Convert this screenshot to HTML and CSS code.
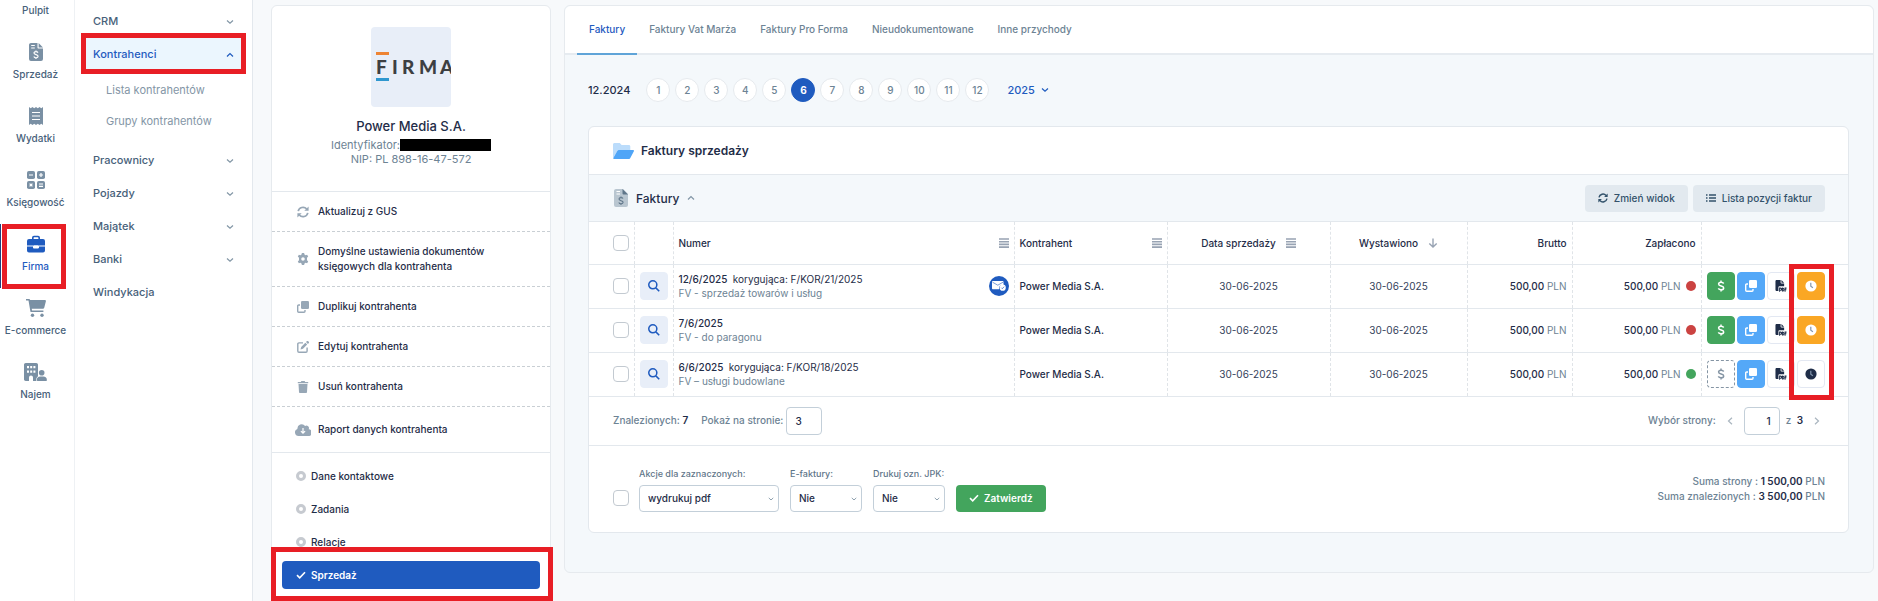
FILE: index.html
```html
<!DOCTYPE html>
<html lang="pl">
<head>
    <meta charset="UTF-8">
    <meta name="viewport" content="width=device-width, initial-scale=1.0">
    <title>Kontrahenci - Sprzedaż</title>
    <link rel="stylesheet" href="styles.css">
</head>
<body>
    <!-- Icon set -->
    <svg class="sprite" aria-hidden="true">
        <symbol id="i-invoice" viewBox="0 0 14 18">
            <path fill-rule="evenodd" d="M2 0h6.5v4.5c0 .6.4 1 1 1H14V16a2 2 0 0 1-2 2H2a2 2 0 0 1-2-2V2C0 .9.9 0 2 0zM2.2 2v1.1h3.6V2zM2.2 4.4v1.1h3.6V4.4z"/>
            <path d="M9.6 0 14 4.4H9.6z"/>
            <path d="M9 9.6C8.600 8.900 7.900 8.600 7 8.600c-1.200 0-2 .6-2 1.500 0 2.100 4.100 1.100 4.100 3.200 0 .9-.9 1.500-2.100 1.500-1 0-1.800-.4-2.200-1.200M7 7.400v1.200M7 14.800V16" fill="none" stroke="#fff" stroke-width="1.2"/>
        </symbol>
        <symbol id="i-receipt" viewBox="0 0 14 18">
            <path d="M0 0l1.700 1.200L3.500 0l1.700 1.200L7 0l1.800 1.200L10.500 0l1.800 1.200L14 0v18l-1.700-1.200L10.500 18l-1.700-1.200L7 18l-1.800-1.200L3.500 18l-1.800-1.200L0 18z"/>
            <path d="M3 5.500h8M3 9h8M3 12.500h8" stroke="#fff" stroke-width="1.100"/>
        </symbol>
        <symbol id="i-calc" viewBox="0 0 18 18">
            <rect width="8" height="8" rx="1.800"/><rect x="10" width="8" height="8" rx="1.800"/>
            <rect y="10" width="8" height="8" rx="1.800"/><rect x="10" y="10" width="8" height="8" rx="1.800"/>
            <path d="M2 4h4M12 4h4M14 2v4M2.600 12.600l2.800 2.800M5.400 12.600l-2.800 2.800M12 13h4M12 15.300h4" stroke="#fff" stroke-width="1.200"/>
        </symbol>
        <symbol id="i-briefcase" viewBox="0 0 18 17">
            <path d="M5.800 4V2.200c0-.7.5-1.200 1.200-1.200h4c.7 0 1.200.5 1.200 1.200V4" fill="none" stroke="currentColor" stroke-width="1.600"/>
            <path d="M2 3.500h14a2 2 0 0 1 2 2V10H0V5.500a2 2 0 0 1 2-2zM0 11h6v1c0 .5.4.9.900.9h4.200c.5 0 .9-.4.9-.9v-1h6v4a2 2 0 0 1-2 2H2a2 2 0 0 1-2-2z"/>
            <path d="M7 10h4v1.800H7z" fill="#fff"/>
        </symbol>
        <symbol id="i-cart" viewBox="0 0 20 18">
            <path d="M0 0h3.200c.4 0 .7.3.8.700L4.100 1H19c.7 0 1.100.6.9 1.200l-1.600 6.200c-.2.800-.9 1.300-1.700 1.300H5.700l.4 1.800h11.300v1.600H5.200c-.4 0-.7-.3-.8-.7L2.500 1.600H0z"/>
            <circle cx="6.500" cy="16.200" r="1.700"/><circle cx="16" cy="16.200" r="1.700"/>
        </symbol>
        <symbol id="i-building" viewBox="0 0 23 18">
            <path fill-rule="evenodd" d="M1.700 0h10.600c.9 0 1.700.8 1.700 1.700v11.600c-1 .8-1.700 2-1.700 3.300V18H9v-3.500a2 2 0 0 0-4 0V18H1.700C.8 18 0 17.200 0 16.300V1.700C0 .8.8 0 1.700 0zM3 3v2.200h2V3zm3.200 0v2.200h2V3zm3.200 0v2.200h2V3zM3 7.500v2.200h2V7.500zm3.200 0v2.200h2V7.500zm3.200 0v2.200h2V7.500z"/>
            <circle cx="17.700" cy="9.800" r="2.800"/>
            <path d="M16.500 13.600h2.700a3.700 3.700 0 0 1 3.700 3.700c0 .4-.3.700-.7.700h-8.700a.7.700 0 0 1-.7-.7 3.700 3.700 0 0 1 3.700-3.700z"/>
        </symbol>
        <symbol id="i-down" viewBox="0 0 8 8"><path d="M1 2.500 4 5.300 7 2.500" fill="none" stroke="currentColor" stroke-width="1.200"/></symbol>
        <symbol id="i-up" viewBox="0 0 8 8"><path d="M1 5.500 4 2.500 7 5.500" fill="none" stroke="currentColor" stroke-width="1.200"/></symbol>
        <symbol id="i-left" viewBox="0 0 8 8"><path d="M6 .8 2.500 4 6 7.200" fill="none" stroke="currentColor" stroke-width="1.200"/></symbol>
        <symbol id="i-right" viewBox="0 0 8 8"><path d="M2 .8 5.500 4 2 7.200" fill="none" stroke="currentColor" stroke-width="1.200"/></symbol>
        <symbol id="i-sync" viewBox="0 0 12 12">
            <path d="M1.200 5.200A4.900 4.900 0 0 1 9.700 3M10.800 6.800A4.900 4.900 0 0 1 2.300 9" fill="none" stroke="currentColor" stroke-width="1.700"/>
            <path d="M11.600.5v4.300H7.300zM.4 11.500V7.200h4.300z"/>
        </symbol>
        <symbol id="i-gear" viewBox="0 0 12 12">
            <path fill-rule="evenodd" d="M4.900 0h2.200l.4 1.600 1 .6 1.600-.5 1.100 1.900-1.200 1.200v2.400l1.200 1.200-1.100 1.900-1.600-.5-1 .6L7.100 12H4.900l-.4-1.600-1-.6-1.600.5L.8 8.400 2 7.200V4.800L.8 3.600l1.100-1.900 1.600.5 1-.6zM6 4.200a1.800 1.800 0 1 0 0 3.600 1.800 1.800 0 0 0 0-3.600z"/>
        </symbol>
        <symbol id="i-copy" viewBox="0 0 12 12">
            <rect x="4" width="8" height="8" rx="1.300"/>
            <path d="M3 4H1.700C1.100 4 .7 4.400.7 5v5.300c0 .6.4 1 1 1H7c.6 0 1-.4 1-1V9" fill="none" stroke="currentColor" stroke-width="1.400"/>
        </symbol>
        <symbol id="i-edit" viewBox="0 0 12 12">
            <path d="M6 1.900H2c-.7 0-1.200.5-1.200 1.200V10c0 .7.5 1.200 1.200 1.200h6.900c.7 0 1.200-.5 1.200-1.200V6.500" fill="none" stroke="currentColor" stroke-width="1.400"/>
            <path d="M8.300 1.700 10.200 3.600 6 7.800l-2.500.7L4.200 6zM9 1l.7-.7a1.100 1.100 0 0 1 1.600 0l.3.300a1.100 1.100 0 0 1 0 1.600l-.7.700z"/>
        </symbol>
        <symbol id="i-trash" viewBox="0 0 12 12">
            <path d="M.8.900h3L4.400 0h3.200l.6.900h3v1.400H.8zM1.500 3h9l-.5 7.900c0 .6-.5 1.100-1.100 1.100H3.100c-.6 0-1.100-.5-1.100-1.100z"/>
        </symbol>
        <symbol id="i-cloud" viewBox="0 0 16 12">
            <path d="M3.600 12A3.600 3.600 0 0 1 2.400 5 4.300 4.300 0 0 1 10.100 2a2.500 2.500 0 0 1 3.600 3.200A3.400 3.400 0 0 1 12.800 12z"/>
            <path d="M8 4v5M5.900 7.100 8 9.200l2.100-2.100" fill="none" stroke="#fff" stroke-width="1.200"/>
        </symbol>
        <symbol id="i-check" viewBox="0 0 10 8"><path d="M1 4.200 3.700 6.800 9 1.200" fill="none" stroke="currentColor" stroke-width="1.600"/></symbol>
        <symbol id="i-search" viewBox="0 0 11 11"><path d="M7.200 7.200 10.300 10.300M8.100 4.400a3.700 3.700 0 1 1-7.400 0 3.700 3.700 0 0 1 7.400 0z" fill="none" stroke="currentColor" stroke-width="1.400"/></symbol>
        <symbol id="i-bars" viewBox="0 0 10 10"><path d="M0 1h10M0 3.700h10M0 6.400h10M0 9.100h10" stroke="currentColor" stroke-width="1.600"/></symbol>
        <symbol id="i-arrow" viewBox="0 0 10 10"><path d="M5 .5v8.500M1.300 5.400 5 9l3.700-3.600" fill="none" stroke="currentColor" stroke-width="1.400"/></symbol>
        <symbol id="i-list" viewBox="0 0 10 8"><path d="M0 1h1.500M3 1h7M0 4h1.500M3 4h7M0 7h1.500M3 7h7" stroke="currentColor" stroke-width="1.300"/></symbol>
        <symbol id="i-dollar" viewBox="0 0 8 12"><path d="M6.700 3.500C6.200 2.700 5.300 2.300 4.100 2.300c-1.500 0-2.500.7-2.500 1.800C1.600 6.800 6.700 5.300 6.700 8c0 1.100-1 1.800-2.600 1.800-1.400 0-2.300-.5-2.800-1.400M4 .4v1.900M4 9.800v1.800" fill="none" stroke="currentColor" stroke-width="1.500"/></symbol>
        <symbol id="i-clock" viewBox="0 0 12 12">
            <circle cx="6" cy="6" r="5.600"/>
            <path class="hands" d="M5.800 2.700v3.500l2.100 1.500" fill="none" stroke-width="1.200"/>
        </symbol>
        <symbol id="i-pdf" viewBox="0 0 12 13">
            <path d="M1.400 0h4.200v3c0 .5.400.9.900.9h2.900v3H4.200c-.6 0-1 .4-1 1V12H1.400C.6 12 0 11.400 0 10.600V1.400C0 .6.600 0 1.400 0zM6.500.1l2.800 2.800H6.500z"/>
            <path d="M4.500 12.700V8.800h1c1.500 0 1.500 2.200 0 2.200h-1M7.500 12.200V8.800c2.200-.2 2.200 3.500 0 3.400M10.400 12.700V8.800H12M10.400 10.600h1.400" fill="none" stroke="currentColor" stroke-width="1.100"/>
        </symbol>
        <symbol id="i-folder" viewBox="0 0 21 16">
            <path d="M1.500 0h5.300l1.800 2h7.200c.9 0 1.500.6 1.500 1.500V7H5L0 15V1.500C0 .7.700 0 1.500 0z" fill="#bbdcfb"/>
            <path d="M5.700 7h14.500c.6 0 1 .6.700 1.200l-3.600 6.900c-.2.500-.7.900-1.300.9H.9c-.5 0-.8-.5-.6-1L4.400 7.800c.3-.5.800-.8 1.300-.8z" fill="#4fa5f7"/>
        </symbol>
        <symbol id="i-mail" viewBox="0 0 14 10">
            <path d="M1 0h9.500c.6 0 1 .4 1 1v3H9.800C8 4 7 5.300 7.200 8.300H1c-.6 0-1-.4-1-1V1c0-.6.400-1 1-1z"/>
            <path d="M.5 1.200 5.800 4.200 11 1.200" fill="none" stroke="#1f5bbf" stroke-width=".6"/>
            <circle cx="10.700" cy="6.700" r="3.100"/>
            <path d="M9.300 6.700l1 1 1.800-2" fill="none" stroke="#1f5bbf" stroke-width=".7"/>
        </symbol>
    </svg>

    <div class="layout">
        <nav class="rail">
            <a class="rail-item first" href="#">Pulpit</a>
            <a class="rail-item" href="#"><svg width="14" height="20"><use href="#i-invoice"/></svg>Sprzedaż</a>
            <a class="rail-item" href="#"><svg width="14" height="20"><use href="#i-receipt"/></svg>Wydatki</a>
            <a class="rail-item" href="#"><svg width="18" height="20"><use href="#i-calc"/></svg>Księgowość</a>
            <a class="rail-item active" href="#"><svg width="18" height="20"><use href="#i-briefcase"/></svg>Firma<span class="mark mark-rail"></span></a>
            <a class="rail-item" href="#"><svg width="20" height="20"><use href="#i-cart"/></svg>E-commerce</a>
            <a class="rail-item" href="#"><svg width="23" height="20"><use href="#i-building"/></svg>Najem</a>
        </nav>

        <nav class="menu">
            <a class="menu-item" href="#">CRM<svg class="chev"><use href="#i-down"/></svg></a>
            <a class="menu-item active" href="#">Kontrahenci<svg class="chev"><use href="#i-up"/></svg><span class="mark mark-menu"></span></a>
            <div class="submenu">
                <a href="#">Lista kontrahentów</a>
                <a href="#">Grupy kontrahentów</a>
            </div>
            <a class="menu-item" href="#">Pracownicy<svg class="chev"><use href="#i-down"/></svg></a>
            <a class="menu-item" href="#">Pojazdy<svg class="chev"><use href="#i-down"/></svg></a>
            <a class="menu-item" href="#">Majątek<svg class="chev"><use href="#i-down"/></svg></a>
            <a class="menu-item" href="#">Banki<svg class="chev"><use href="#i-down"/></svg></a>
            <a class="menu-item" href="#">Windykacja</a>
        </nav>

        <aside class="card profile">
            <div class="profile-head">
                <svg class="logo" viewBox="0 0 80 80">
                    <rect x="5" y="25" width="13" height="3" fill="#ee8434"/>
                    <text x="5 21 31 48 69" y="47">FIRMA</text>
                    <rect x="5" y="51" width="13" height="3" fill="#2f97cf"/>
                </svg>
                <h1>Power Media S.A.</h1>
                <div class="ident">Identyfikator:<span class="redacted"></span></div>
                <div class="nip">NIP: PL 898-16-47-572</div>
            </div>
            <div class="profile-actions">
                <a href="#"><svg><use href="#i-sync"/></svg>Aktualizuj z GUS</a>
                <a href="#"><svg><use href="#i-gear"/></svg>Domyślne ustawienia dokumentów księgowych dla kontrahenta</a>
                <a href="#"><svg><use href="#i-copy"/></svg>Duplikuj kontrahenta</a>
                <a href="#"><svg><use href="#i-edit"/></svg>Edytuj kontrahenta</a>
                <a href="#"><svg><use href="#i-trash"/></svg>Usuń kontrahenta</a>
                <a class="last" href="#"><svg><use href="#i-cloud"/></svg>Raport danych kontrahenta</a>
            </div>
            <div class="profile-tabs">
                <a href="#"><span class="ring"></span>Dane kontaktowe</a>
                <a href="#"><span class="ring"></span>Zadania</a>
                <a href="#"><span class="ring"></span>Relacje</a>
                <a class="active" href="#"><svg><use href="#i-check"/></svg>Sprzedaż<span class="mark mark-tab"></span></a>
            </div>
        </aside>

        <main class="card main">
            <nav class="tabs">
                <a class="active" href="#">Faktury</a>
                <a href="#">Faktury Vat Marża</a>
                <a href="#">Faktury Pro Forma</a>
                <a href="#">Nieudokumentowane</a>
                <a href="#">Inne przychody</a>
            </nav>
            <div class="content">
                <div class="months">
                    <a class="prev-month" href="#">12.2024</a>
                    <div class="month-list">
                        <button>1</button><button>2</button><button>3</button><button>4</button>
                        <button>5</button><button class="active">6</button><button>7</button><button>8</button>
                        <button>9</button><button>10</button><button>11</button><button>12</button>
                    </div>
                    <button class="year">2025<svg class="chev"><use href="#i-down"/></svg></button>
                </div>

                <section class="panel">
                    <div class="panel-title">
                        <svg width="21" height="16"><use href="#i-folder"/></svg>
                        <h2>Faktury sprzedaży</h2>
                    </div>
                    <div class="panel-bar">
                        <svg class="bar-icon" viewBox="0 0 14 18">
                            <path d="M2 0h7l5 5v11a2 2 0 0 1-2 2H2a2 2 0 0 1-2-2V2C0 .9.900 0 2 0z" fill="#b9c6d0"/>
                            <path d="M8.500 0 14 5.500H9.500a1 1 0 0 1-1-1z" fill="#5f7689"/>
                            <path d="M2.500 2.500h3.500M2.500 5h3.500" stroke="#fff"/>
                            <path d="M9 9.600C8.600 8.900 7.900 8.600 7 8.600c-1.200 0-2 .6-2 1.500 0 2.100 4.100 1.100 4.100 3.200 0 .9-.9 1.500-2.100 1.500-1 0-1.800-.4-2.200-1.200M7 7.400v1.200M7 14.800V16" fill="none" stroke="#5f7689" stroke-width="1.100"/>
                        </svg>
                        <h3>Faktury</h3>
                        <svg class="chev"><use href="#i-up"/></svg>
                        <div class="bar-buttons">
                            <button class="btn-light"><svg width="10" height="10"><use href="#i-sync"/></svg>Zmień widok</button>
                            <button class="btn-light"><svg width="10" height="8"><use href="#i-list"/></svg>Lista pozycji faktur</button>
                        </div>
                    </div>

                    <table class="invoices">
                        <colgroup>
                            <col class="c-check"><col class="c-view"><col><col class="c-client"><col class="c-sale">
                            <col class="c-issued"><col class="c-gross"><col class="c-paid"><col class="c-tools">
                        </colgroup>
                        <thead>
                            <tr>
                                <th class="check"><input type="checkbox" aria-label="Zaznacz wszystkie"></th>
                                <th></th>
                                <th><div class="cell">Numer<svg class="sort"><use href="#i-bars"/></svg></div></th>
                                <th><div class="cell">Kontrahent<svg class="sort"><use href="#i-bars"/></svg></div></th>
                                <th><div class="cell center">Data sprzedaży<svg class="sort"><use href="#i-bars"/></svg></div></th>
                                <th><div class="cell center">Wystawiono<svg class="sort"><use href="#i-arrow"/></svg></div></th>
                                <th class="num">Brutto</th>
                                <th class="num">Zapłacono</th>
                                <th></th>
                            </tr>
                        </thead>
                        <tbody>
                            <tr>
                                <td class="check"><input type="checkbox" aria-label="12/6/2025"></td>
                                <td><button class="tool view" aria-label="Podgląd"><svg><use href="#i-search"/></svg></button></td>
                                <td>
                                    <div class="cell">
                                        <div><b>12/6/2025</b>&nbsp; <span class="corr">korygująca: F/KOR/21/2025</span><small>FV - sprzedaż towarów i usług</small></div>
                                        <span class="mail"><svg><use href="#i-mail"/></svg></span>
                                    </div>
                                </td>
                                <td>Power Media S.A.</td>
                                <td class="date">30-06-2025</td>
                                <td class="date">30-06-2025</td>
                                <td class="num">500,00 <i>PLN</i></td>
                                <td class="num">500,00 <i>PLN</i><span class="dot red"></span></td>
                                <td>
                                    <div class="tools">
                                        <button class="tool green" aria-label="Zapłata"><svg><use href="#i-dollar"/></svg></button>
                                        <button class="tool blue" aria-label="Duplikuj"><svg><use href="#i-copy"/></svg></button>
                                        <button class="tool" aria-label="Pobierz"><svg><use href="#i-pdf"/></svg></button>
                                        <button class="tool orange" aria-label="Historia"><svg><use href="#i-clock"/></svg><span class="mark mark-tools"></span></button>
                                    </div>
                                </td>
                            </tr>
                            <tr>
                                <td class="check"><input type="checkbox" aria-label="7/6/2025"></td>
                                <td><button class="tool view" aria-label="Podgląd"><svg><use href="#i-search"/></svg></button></td>
                                <td><b>7/6/2025</b><small>FV - do paragonu</small></td>
                                <td>Power Media S.A.</td>
                                <td class="date">30-06-2025</td>
                                <td class="date">30-06-2025</td>
                                <td class="num">500,00 <i>PLN</i></td>
                                <td class="num">500,00 <i>PLN</i><span class="dot red"></span></td>
                                <td>
                                    <div class="tools">
                                        <button class="tool green" aria-label="Zapłata"><svg><use href="#i-dollar"/></svg></button>
                                        <button class="tool blue" aria-label="Duplikuj"><svg><use href="#i-copy"/></svg></button>
                                        <button class="tool" aria-label="Pobierz"><svg><use href="#i-pdf"/></svg></button>
                                        <button class="tool orange" aria-label="Historia"><svg><use href="#i-clock"/></svg></button>
                                    </div>
                                </td>
                            </tr>
                            <tr>
                                <td class="check"><input type="checkbox" aria-label="6/6/2025"></td>
                                <td><button class="tool view" aria-label="Podgląd"><svg><use href="#i-search"/></svg></button></td>
                                <td><b>6/6/2025</b>&nbsp; <span class="corr">korygująca: F/KOR/18/2025</span><small>FV – usługi budowlane</small></td>
                                <td>Power Media S.A.</td>
                                <td class="date">30-06-2025</td>
                                <td class="date">30-06-2025</td>
                                <td class="num">500,00 <i>PLN</i></td>
                                <td class="num">500,00 <i>PLN</i><span class="dot"></span></td>
                                <td>
                                    <div class="tools">
                                        <button class="tool dashed" aria-label="Zapłata"><svg><use href="#i-dollar"/></svg></button>
                                        <button class="tool blue" aria-label="Duplikuj"><svg><use href="#i-copy"/></svg></button>
                                        <button class="tool" aria-label="Pobierz"><svg><use href="#i-pdf"/></svg></button>
                                        <button class="tool" aria-label="Historia"><svg><use href="#i-clock"/></svg></button>
                                    </div>
                                </td>
                            </tr>
                        </tbody>
                    </table>

                    <div class="pager">
                        <span>Znalezionych: <b>7</b></span>
                        <label class="per-page" for="per-page">Pokaż na stronie:</label>
                        <input id="per-page" type="text" value="3">
                        <div class="pages">
                            <label for="page">Wybór strony:</label>
                            <svg class="arrow"><use href="#i-left"/></svg>
                            <input id="page" class="page-no" type="text" value="1">
                            <span>z &nbsp;<b>3</b></span>
                            <svg class="arrow"><use href="#i-right"/></svg>
                        </div>
                    </div>

                    <div class="bulk">
                        <input type="checkbox" aria-label="Zaznacz wszystkie">
                        <div class="field wide">
                            <label for="action">Akcje dla zaznaczonych:</label>
                            <div class="select"><select id="action"><option>wydrukuj pdf</option></select><svg><use href="#i-down"/></svg></div>
                        </div>
                        <div class="field">
                            <label for="einvoice">E-faktury:</label>
                            <div class="select"><select id="einvoice"><option>Nie</option></select><svg><use href="#i-down"/></svg></div>
                        </div>
                        <div class="field">
                            <label for="jpk">Drukuj ozn. JPK:</label>
                            <div class="select"><select id="jpk"><option>Nie</option></select><svg><use href="#i-down"/></svg></div>
                        </div>
                        <button class="btn-submit"><svg width="10" height="8"><use href="#i-check"/></svg>Zatwierdź</button>
                        <div class="sums">
                            <div>Suma strony : <b>1 500,00</b> PLN</div>
                            <div>Suma znalezionych : <b>3 500,00</b> PLN</div>
                        </div>
                    </div>
                </section>
            </div>
        </main>
    </div>
</body>
</html>
```

FILE: styles.css
```css
* {
    box-sizing: border-box;
}

body {
    margin: 0;
    background: #f7f9fb;
    color: #1f2d48;
    font-family: Inter, 'Liberation Sans', sans-serif;
    font-size: 11px;
    line-height: 15px;
}

a {
    color: inherit;
    text-decoration: none;
}

button, input, select {
    font: inherit;
    color: inherit;
    margin: 0;
}

button {
    cursor: pointer;
}

svg {
    fill: currentColor;
    flex: none;
}

h1, h2, h3 {
    margin: 0;
}

b {
    font-weight: 600;
}

.sprite {
    position: absolute;
    width: 0;
    height: 0;
}

.layout {
    display: flex;
    align-items: flex-start;
    height: 100vh;
    overflow: hidden;
}

.chev {
    width: 8px;
    height: 8px;
    color: #8296a6;
}

/* red highlight frames */
.mark {
    position: absolute;
    border: 5px solid #e81e25;
    pointer-events: none;
}

/* left icon rail */
.rail {
    flex: none;
    width: 75px;
    height: 100%;
    background: #fff;
    border-right: 1px solid #eef1f4;
}

.rail-item {
    position: relative;
    display: flex;
    flex-direction: column;
    align-items: center;
    gap: 4px;
    padding: 10px 3px 14px 0;
    font-size: 10px;
    line-height: 16px;
    font-weight: 500;
    color: #47617a;
}

.rail-item.first {
    padding-top: 2px;
}

.rail-item svg {
    color: #7a90a4;
}

.rail-item.active,
.rail-item.active svg {
    color: #1f5bbf;
}

.rail-item.active {
    box-shadow: inset 1px 0 #1f3f7f;
}

.mark-rail {
    inset: 0 8px -1px 2px;
}

/* menu */
.menu {
    flex: none;
    width: 178px;
    height: 100%;
    padding: 5px 6px 0 11px;
    background: #fff;
    border-right: 1px solid #e3e8ed;
}

.menu-item {
    position: relative;
    display: flex;
    align-items: center;
    justify-content: space-between;
    height: 33px;
    padding: 0 12px 0 7px;
    font-weight: 500;
    color: #47617a;
}

.menu-item.active {
    background: #ebf6fe;
    color: #1f5bbf;
}

.menu-item.active .chev {
    color: #1f5bbf;
}

.mark-menu {
    inset: -5px 0 -3px -5px;
}

.submenu {
    padding: 4px 0 7px 20px;
    line-height: 31px;
    color: #8496a6;
}

.submenu a {
    display: block;
}

/* cards */
.card {
    margin-top: 5px;
    border: 1px solid #e6eaee;
    border-radius: 6px;
    background: #fff;
}

.profile {
    flex: none;
    width: 280px;
    margin-left: 18px;
}

.profile-head {
    display: flex;
    flex-direction: column;
    align-items: center;
    height: 186px;
    padding-top: 21px;
    border-bottom: 1px solid #e3e8ed;
    color: #6d8394;
    line-height: 14px;
}

.logo {
    width: 80px;
    height: 80px;
    border-radius: 4px;
    background: #e8eef8;
}

.logo text {
    font-family: Lato, sans-serif;
    font-size: 19px;
    font-weight: 900;
    fill: #3d3f42;
}

.profile-head h1 {
    margin: 10px 0 3px;
    font-size: 13px;
    line-height: 18px;
    font-weight: 500;
    color: #1f2d48;
}

.ident {
    display: flex;
    align-items: center;
}

.redacted {
    width: 91px;
    height: 12px;
    background: #000;
}

.profile-actions {
    border-bottom: 1px solid #e3e8ed;
    font-size: 10px;
}

.profile-actions a {
    display: flex;
    align-items: center;
    gap: 7px;
    padding: 12px 40px 12px 23px;
    border-bottom: 1px dashed #c9cfd4;
    font-weight: 500;
}

.profile-actions a.last {
    padding-top: 15px;
    padding-bottom: 15px;
    border-bottom: 0;
}

.profile-actions svg {
    width: 16px;
    height: 12px;
    color: #97a7b6;
}

.profile-tabs {
    padding: 9px 10px;
    font-size: 10px;
    font-weight: 500;
}

.profile-tabs a {
    position: relative;
    display: flex;
    align-items: center;
    gap: 5px;
    height: 28px;
    margin-bottom: 5px;
    padding-left: 14px;
}

.profile-tabs .ring {
    width: 10px;
    height: 10px;
    border: 3px solid #c6cad0;
    border-radius: 50%;
}

.profile-tabs svg {
    width: 10px;
    height: 8px;
}

.profile-tabs a.active {
    border-radius: 4px;
    background: #1f5bbf;
    color: #fff;
    font-weight: 600;
}

.mark-tab {
    inset: -14px -13px -12px -11px;
}

/* main area */
.main {
    flex: 1;
    min-width: 0;
    margin-left: 13px;
    margin-right: 4px;
    background: #f4f8fb;
}

.tabs {
    display: flex;
    padding-left: 12px;
    background: #fff;
    border-bottom: 2px solid #e6ebf0;
    border-radius: 6px 6px 0 0;
    font-size: 10px;
    font-weight: 500;
    color: #6d8394;
}

.tabs a {
    margin-bottom: -2px;
    padding: 16px 12px;
    border-bottom: 2px solid transparent;
}

.tabs a.active {
    color: #1f5bbf;
    border-color: #5fa4d8;
}

.content {
    padding: 23px 24px 39px 23px;
}

.months {
    display: flex;
    align-items: center;
    margin-bottom: 24px;
    font-weight: 500;
}

.month-list {
    display: flex;
    gap: 5px;
    margin: 0 18px 0 16px;
}

.month-list button {
    width: 24px;
    height: 24px;
    padding: 0;
    border: 1px solid #e6eaee;
    border-radius: 50%;
    background: #fff;
    color: #6d8394;
    font-size: 10px;
}

.month-list .active {
    background: #1f5bbf;
    border-color: #1f5bbf;
    color: #fff;
    font-weight: 700;
}

.year {
    display: flex;
    align-items: center;
    gap: 6px;
    padding: 0;
    border: 0;
    background: none;
    color: #1f5bbf;
}

.year .chev {
    color: #1f5bbf;
}

/* invoices panel */
.panel {
    border: 1px solid #e3e8ed;
    border-radius: 6px;
    background: #fff;
}

.panel-title {
    display: flex;
    align-items: center;
    gap: 7px;
    height: 47px;
    padding: 0 24px;
}

.panel-title h2 {
    font-size: 12px;
    font-weight: 600;
}

.panel-bar {
    display: flex;
    align-items: center;
    gap: 8px;
    height: 48px;
    padding: 0 23px 0 25px;
    border: solid #e3e8ed;
    border-width: 1px 0;
    background: #f4f8fb;
}

.bar-icon {
    width: 14px;
    height: 18px;
}

.panel-bar h3 {
    font-size: 12px;
    font-weight: 500;
}

.bar-buttons {
    display: flex;
    gap: 5px;
    margin-left: auto;
}

.btn-light {
    display: flex;
    align-items: center;
    gap: 6px;
    height: 27px;
    padding: 0 13px;
    border: 0;
    border-radius: 4px;
    background: #e2e9ef;
    color: #33526b;
    font-size: 10px;
    font-weight: 500;
}

.invoices {
    width: 100%;
    table-layout: fixed;
    border-collapse: collapse;
    font-size: 10px;
    line-height: 14px;
    font-weight: 500;
}

.c-check { width: 45px; }
.c-view { width: 39px; }
.c-client { width: 153px; }
.c-sale { width: 163px; }
.c-issued { width: 137px; }
.c-gross { width: 105px; }
.c-paid { width: 129px; }
.c-tools { width: 147px; }

.invoices th,
.invoices td {
    height: 44px;
    padding: 0 5px;
    border-bottom: 1px solid #e3e8ed;
    border-right: 1px dashed #e0e4e8;
    text-align: left;
    font-weight: 500;
}

.invoices th {
    height: 42px;
}

.invoices th:last-child,
.invoices td:last-child {
    border-right: 0;
}

.invoices .check {
    padding-left: 24px;
}

.invoices .num {
    text-align: right;
    white-space: nowrap;
}

.invoices .date {
    text-align: center;
    color: #33415a;
    font-weight: 400;
}

.invoices b {
    font-weight: 500;
}

.invoices .corr {
    font-weight: 400;
}

.invoices i {
    font-style: normal;
    font-weight: 400;
    color: #6d8394;
}

.invoices small {
    display: block;
    font-size: 10px;
    font-weight: 400;
    color: #6d8394;
}

.cell {
    display: flex;
    align-items: center;
    justify-content: space-between;
}

.cell.center {
    justify-content: center;
    gap: 10px;
}

.sort {
    width: 10px;
    height: 10px;
    color: #98a3b3;
}

input[type="checkbox"] {
    appearance: none;
    display: block;
    flex: none;
    width: 16px;
    height: 16px;
    border: 1px solid #c3cad1;
    border-radius: 4px;
    background: #fff;
}

.mail {
    display: flex;
    align-items: center;
    justify-content: center;
    width: 20px;
    height: 20px;
    border-radius: 50%;
    background: #1f5bbf;
    color: #fff;
}

.mail svg {
    width: 14px;
    height: 10px;
}

.dot {
    display: inline-block;
    width: 10px;
    height: 10px;
    margin-left: 5px;
    border-radius: 50%;
    background: #43a55d;
    vertical-align: -1px;
}

.dot.red {
    background: #cb4341;
}

.tools {
    display: flex;
    gap: 2px;
}

.tool {
    position: relative;
    display: flex;
    align-items: center;
    justify-content: center;
    width: 28px;
    height: 28px;
    padding: 0;
    border: 1px solid #e3e8f2;
    border-radius: 4px;
    background: #fff;
}

.tool svg {
    width: 12px;
    height: 12px;
}

.hands {
    stroke: #8295ac;
}

.tool.view {
    background: #e8eef8;
    border-color: #e8eef8;
    color: #1f5bbf;
}

.tool.green {
    background: #43a55d;
    border-color: #43a55d;
    color: #fff;
}

.tool.blue {
    background: #54a8f8;
    border-color: #54a8f8;
    color: #fff;
}

.tool.orange {
    background: #faa724;
    border-color: #faa724;
    color: #fff;
}

.tool.dashed {
    border: 1px dashed #8595a4;
    color: #8595a4;
}

.mark-tools {
    top: -9px;
    left: -9px;
    width: 45px;
    height: 136px;
    z-index: 1;
}

.pager {
    display: flex;
    align-items: center;
    height: 49px;
    padding: 0 24px;
    border-bottom: 1px solid #e3e8ed;
    color: #6d8394;
    font-size: 10px;
    font-weight: 500;
}

.pager b,
.sums b {
    color: #1f2d48;
}

.pager input {
    width: 36px;
    height: 28px;
    padding: 0 8px;
    border: 1px solid #c3cfd9;
    border-radius: 4px;
    background: #fff;
    color: #1f2d48;
}

.per-page {
    margin: 0 3px 0 13px;
}

.pages {
    display: flex;
    align-items: center;
    gap: 6px;
    margin-left: auto;
}

.pages .page-no {
    text-align: right;
}

.arrow {
    width: 8px;
    height: 8px;
    margin: 0 4px;
    color: #a9b5bf;
}

.pages .arrow:last-child {
    margin-right: 3px;
}

.bulk {
    display: flex;
    align-items: flex-end;
    gap: 10px;
    padding: 20px 23px 20px 24px;
}

.bulk > input {
    margin-bottom: 6px;
}

.field {
    width: 72px;
    margin-right: 1px;
}

.field.wide {
    width: 140px;
}

.field label {
    display: block;
    margin-bottom: 4px;
    font-size: 9px;
    font-weight: 500;
    color: #5f7689;
    white-space: nowrap;
}

.select {
    position: relative;
}

.select select {
    appearance: none;
    display: block;
    width: 100%;
    height: 27px;
    padding: 0 8px;
    border: 1px solid #c3cfd9;
    border-radius: 4px;
    background: #fff;
    font-size: 10px;
    font-weight: 500;
}

.select svg {
    position: absolute;
    top: 11px;
    right: 5px;
    width: 6px;
    height: 6px;
    color: #8296a6;
}

.btn-submit {
    display: flex;
    align-items: center;
    gap: 5px;
    height: 27px;
    padding: 0 13px;
    border: 0;
    border-radius: 4px;
    background: #43a55d;
    color: #fff;
    font-size: 10px;
    font-weight: 600;
}

.sums {
    margin-left: auto;
    padding-bottom: 8px;
    text-align: right;
    color: #6d8394;
    font-size: 10px;
    font-weight: 500;
}
```
